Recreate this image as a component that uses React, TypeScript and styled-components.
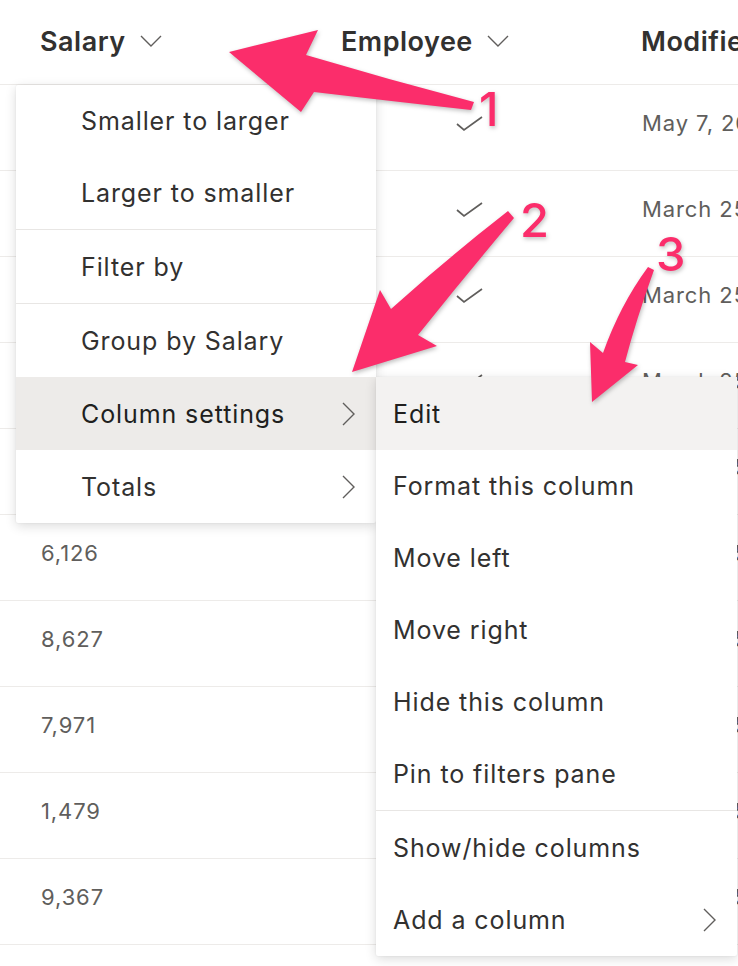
import React from 'react';
import styled, { createGlobalStyle } from 'styled-components';

const GlobalStyle = createGlobalStyle`
  html, body {
    margin: 0;
    padding: 0;
    background: #ffffff;
  }
  body {
    font-family: Inter, "Open Sans", "Liberation Sans", sans-serif;
    -webkit-font-smoothing: antialiased;
  }
`;

const Page = styled.div`
  position: relative;
  width: 738px;
  height: 966px;
  overflow: hidden;
  background: #ffffff;
`;

const Grid = styled.div`
  display: grid;
  grid-template-columns: 301px 300px 1fr;
  padding-left: 40px;
  align-items: center;
  border-bottom: 1px solid #edebe9;
  box-sizing: border-box;
`;

const HeaderRow = styled(Grid)`
  height: 85px;
  padding-bottom: 2px;
`;

const HeaderCell = styled.div`
  display: flex;
  align-items: center;
  gap: 14px;
  font-size: 27px;
  font-weight: 600;
  color: #323130;
  white-space: nowrap;
  letter-spacing: 0.5px;
`;

const Row = styled(Grid)`
  height: 86px;
  padding-bottom: 8px;
`;

const ValueCell = styled.div`
  font-size: 22px;
  color: #605e5c;
  white-space: nowrap;
  padding-left: 1px;
  letter-spacing: 0.9px;
  min-height: 27px;
`;

const CheckCell = styled.div`
  padding-left: 115px;
  display: flex;
  align-items: center;
`;

const Menu = styled.div<{ $left: number; $top: number; $width: number }>`
  position: absolute;
  left: ${p => p.$left}px;
  top: ${p => p.$top}px;
  width: ${p => p.$width}px;
  background: #ffffff;
  border-radius: 2px;
  box-shadow: 0 3px 12px rgba(0, 0, 0, 0.14), 0 0 2px rgba(0, 0, 0, 0.08);
  display: flex;
  flex-direction: column;
`;

const Item = styled.div<{ $active?: boolean; $divided?: boolean; $indent: number; $height: number }>`
  height: ${p => p.$height}px;
  box-sizing: border-box;
  display: flex;
  align-items: center;
  justify-content: space-between;
  padding: 0 21px 0 ${p => p.$indent}px;
  font-size: 25px;
  letter-spacing: 0.9px;
  color: ${p => (p.$active ? '#201f1e' : '#323130')};
  background: ${p => (p.$active ? '#edebe9' : 'transparent')};
  border-top: ${p => (p.$divided ? '1px solid #e8e6e4' : 'none')};
  white-space: nowrap;
`;

const SubItem = styled(Item)<{ $active?: boolean }>`
  background: ${p => (p.$active ? '#f3f2f1' : 'transparent')};
`;

const Overlay = styled.svg`
  position: absolute;
  left: 0;
  top: 0;
  pointer-events: none;
  filter: drop-shadow(1px 2px 2px rgba(0, 0, 0, 0.25));
`;

const Label = styled.text`
  font-family: Inter, "Open Sans", "Liberation Sans", sans-serif;
  font-size: 47px;
  font-weight: 500;
  fill: #fb2d6b;
`;

function ChevronDown() {
  return (
    <svg width="22" height="12" viewBox="0 0 22 12">
      <path d="M1 1 L11 11 L21 1" fill="none" stroke="#605e5c" strokeWidth="1.4" />
    </svg>
  );
}

function ChevronRight() {
  return (
    <svg width="13" height="24" viewBox="0 0 13 24">
      <path d="M1 1 L12 12 L1 23" fill="none" stroke="#605e5c" strokeWidth="1.4" />
    </svg>
  );
}

function Check() {
  return (
    <svg width="27" height="16" viewBox="0 0 27 16">
      <path d="M1 8 L8 14 L26 1" fill="none" stroke="#605e5c" strokeWidth="1.7" />
    </svg>
  );
}

// first five salaries sit under the open menu, so they are left blank
const rows = [
  { salary: '', check: true, date: 'May 7, 2021' },
  { salary: '', check: true, date: 'March 25, 2021' },
  { salary: '', check: true, date: 'March 25, 2021' },
  { salary: '', check: true, date: 'March 25, 2021' },
  { salary: '', check: true, date: 'March 25, 2021' },
  { salary: '6,126', check: false, date: 'March 25, 2021' },
  { salary: '8,627', check: false, date: 'March 25, 2021' },
  { salary: '7,971', check: false, date: 'March 25, 2021' },
  { salary: '1,479', check: false, date: 'March 25, 2021' },
  { salary: '9,367', check: false, date: 'March 25, 2021' },
];

const mainItems = [
  { label: 'Smaller to larger', height: 72 },
  { label: 'Larger to smaller', height: 72 },
  { label: 'Filter by', divided: true, height: 74 },
  { label: 'Group by Salary', divided: true, height: 74 },
  { label: 'Column settings', active: true, sub: true, height: 73 },
  { label: 'Totals', sub: true, height: 73 },
];

const subItems = [
  { label: 'Edit', active: true, height: 73 },
  { label: 'Format this column', height: 72 },
  { label: 'Move left', height: 72 },
  { label: 'Move right', height: 72 },
  { label: 'Hide this column', height: 72 },
  { label: 'Pin to filters pane', height: 72 },
  { label: 'Show/hide columns', divided: true, height: 74 },
  { label: 'Add a column', sub: true, height: 72 },
];

export default function App() {
  return (
    <>
      <GlobalStyle />
      <Page>
        <HeaderRow>
          <HeaderCell>
            Salary <ChevronDown />
          </HeaderCell>
          <HeaderCell>
            Employee <ChevronDown />
          </HeaderCell>
          <HeaderCell>Modified</HeaderCell>
        </HeaderRow>
        {rows.map((r, i) => (
          <Row key={i}>
            <ValueCell>{r.salary}</ValueCell>
            <CheckCell>{r.check && <Check />}</CheckCell>
            <ValueCell>{r.date}</ValueCell>
          </Row>
        ))}

        <Menu $left={16} $top={85} $width={360}>
          {mainItems.map(m => (
            <Item
              key={m.label}
              $indent={65}
              $height={m.height}
              $active={m.active}
              $divided={m.divided}
            >
              {m.label}
              {m.sub && <ChevronRight />}
            </Item>
          ))}
        </Menu>

        <Menu $left={376} $top={377} $width={361}>
          {subItems.map(m => (
            <SubItem
              key={m.label}
              $indent={17}
              $height={m.height}
              $active={m.active}
              $divided={m.divided}
            >
              {m.label}
              {m.sub && <ChevronRight />}
            </SubItem>
          ))}
        </Menu>

        <Overlay width="738" height="966" viewBox="0 0 738 966">
          <path
            d="M229 52 L318 30 L306 55 Q390 80 474 102 L471 110 Q390 101 314 92 L301 112 Z"
            fill="#fb2d6b"
          />
          <path
            d="M352 372 L380 290 L391 309 Q450 256 508 211 L514 218 Q466 275 418 335 L437 346 Z"
            fill="#fb2d6b"
          />
          <path
            d="M592 402 L590 342 L603 353 Q620 305 648 267 L654 270 Q636 320 625 362 L638 365 Z"
            fill="#fb2d6b"
          />
          <Label x="479" y="126">1</Label>
          <Label x="520" y="237">2</Label>
          <Label x="656" y="271">3</Label>
        </Overlay>
      </Page>
    </>
  );
}
